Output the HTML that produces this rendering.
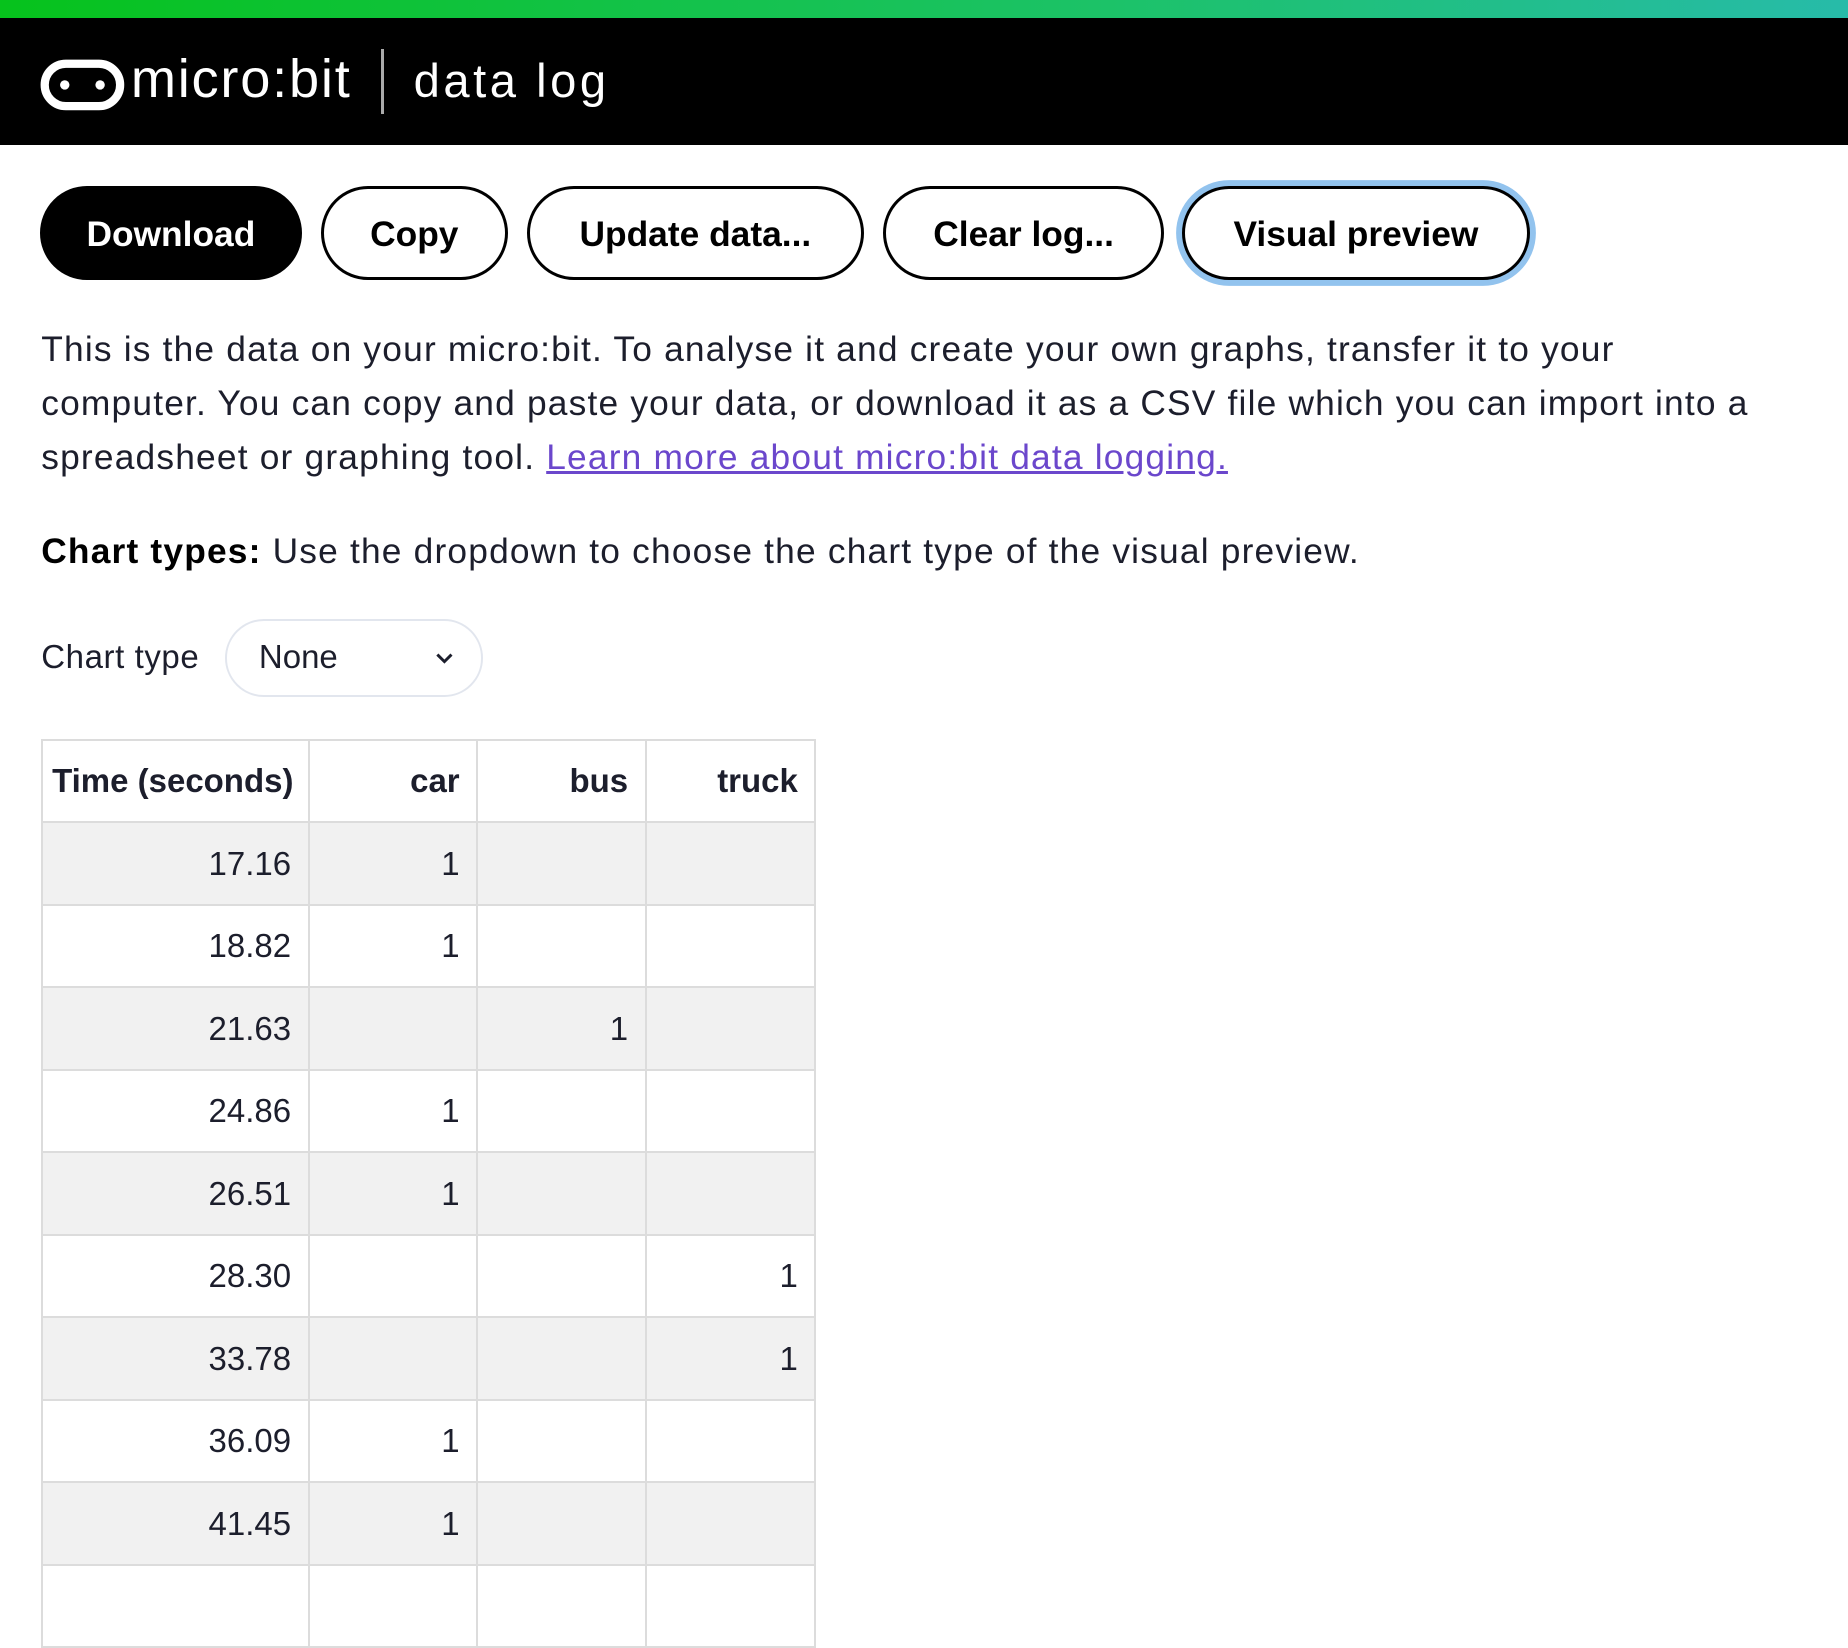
<!DOCTYPE html>
<html><head><meta charset="utf-8"><style>
html{zoom:1.17857}
body{margin:0;width:1568px;height:1331px;background:#fff;font-family:"Liberation Sans",sans-serif;color:#1c1e2c;position:relative;overflow:hidden}
.bar{position:absolute;left:0;top:0;width:1568px;height:15px;background:linear-gradient(90deg,#06c21c,#1cc268 60%,#27bba9)}
.hdr{position:absolute;left:0;top:15px;width:1568px;height:108px;background:#000}
.abs{position:absolute;white-space:nowrap}
.btn{position:absolute;top:158px;height:80px;box-sizing:border-box;border:3px solid #000;border-radius:40px;background:#fff;font-weight:bold;font-size:30px;display:flex;align-items:center;justify-content:center;color:#000;padding-top:3px}
p{margin:0}
table{position:absolute;left:35px;top:627px;border-collapse:collapse;font-size:28px;table-layout:fixed;width:656px}
td,th{border:2px solid #dcdcdc;height:70px;text-align:right;padding:0 14px;box-sizing:border-box;white-space:nowrap;overflow:visible}
th{font-weight:bold;background:#fff}
tr.g td{background:#f1f1f1}
</style></head><body>
<div class="bar"></div>
<div class="hdr">
<svg style="position:absolute;left:34px;top:35px" width="72" height="44" viewBox="0 0 72 44"><rect x="4" y="4" width="64" height="36" rx="18" fill="none" stroke="#fff" stroke-width="7"/><circle cx="21" cy="22" r="4" fill="#fff"/><circle cx="51" cy="22" r="4" fill="#fff"/></svg>
<div class="abs" style="left:111px;top:26px;font-size:46px;color:#fff;letter-spacing:1.5px">micro:bit</div>
<div style="position:absolute;left:323px;top:27px;width:3px;height:55px;background:#aaa"></div>
<div class="abs" style="left:351px;top:30px;font-size:40px;color:#fff;letter-spacing:3px">data log</div>
</div>
<div class="btn" style="left:34px;width:222px;background:#000;color:#fff">Download</div>
<div class="btn" style="left:272px;width:159px">Copy</div>
<div class="btn" style="left:447px;width:286px">Update data...</div>
<div class="btn" style="left:749px;width:239px">Clear log...</div>
<div class="btn" style="left:1003px;width:295px;box-shadow:0 0 0 5px #92c3ee">Visual preview</div>
<div class="abs" style="left:35px;top:274px;font-size:30px;line-height:46px;letter-spacing:1px">
<p>This is the data on your micro:bit. To analyse it and create your own graphs, transfer it to your</p>
<p>computer. You can copy and paste your data, or download it as a CSV file which you can import into a</p>
<p>spreadsheet or graphing tool. <span style="color:#6b47cc;text-decoration:underline">Learn more about micro:bit data logging.</span></p>
</div>
<div class="abs" style="left:35px;top:448px;font-size:30px;line-height:40px;letter-spacing:1px"><b style="color:#000">Chart types:</b> Use the dropdown to choose the chart type of the visual preview.</div>
<div class="abs" style="left:35px;top:541px;font-size:28px;letter-spacing:0.5px">Chart type</div>
<div style="position:absolute;left:191px;top:525px;width:219px;height:66px;box-sizing:border-box;border:2px solid #e2e6ee;border-radius:33px">
<div class="abs" style="left:27px;top:15px;font-size:28px">None</div>
<svg style="position:absolute;left:176px;top:26px" width="16" height="12" viewBox="0 0 16 12"><path d="M2 3l6 6 6-6" fill="none" stroke="#1c1e2c" stroke-width="2.5"/></svg>
</div>
<table>
<colgroup><col style="width:226px"><col style="width:143px"><col style="width:143px"><col style="width:144px"></colgroup>
<tr><th style="padding:0 12px 0 0">Time (seconds)</th><th>car</th><th>bus</th><th>truck</th></tr>
<tr class="g"><td>17.16</td><td>1</td><td></td><td></td></tr>
<tr><td>18.82</td><td>1</td><td></td><td></td></tr>
<tr class="g"><td>21.63</td><td></td><td>1</td><td></td></tr>
<tr><td>24.86</td><td>1</td><td></td><td></td></tr>
<tr class="g"><td>26.51</td><td>1</td><td></td><td></td></tr>
<tr><td>28.30</td><td></td><td></td><td>1</td></tr>
<tr class="g"><td>33.78</td><td></td><td></td><td>1</td></tr>
<tr><td>36.09</td><td>1</td><td></td><td></td></tr>
<tr class="g"><td>41.45</td><td>1</td><td></td><td></td></tr>
<tr><td>&nbsp;</td><td></td><td></td><td></td></tr>
</table>
</body></html>
